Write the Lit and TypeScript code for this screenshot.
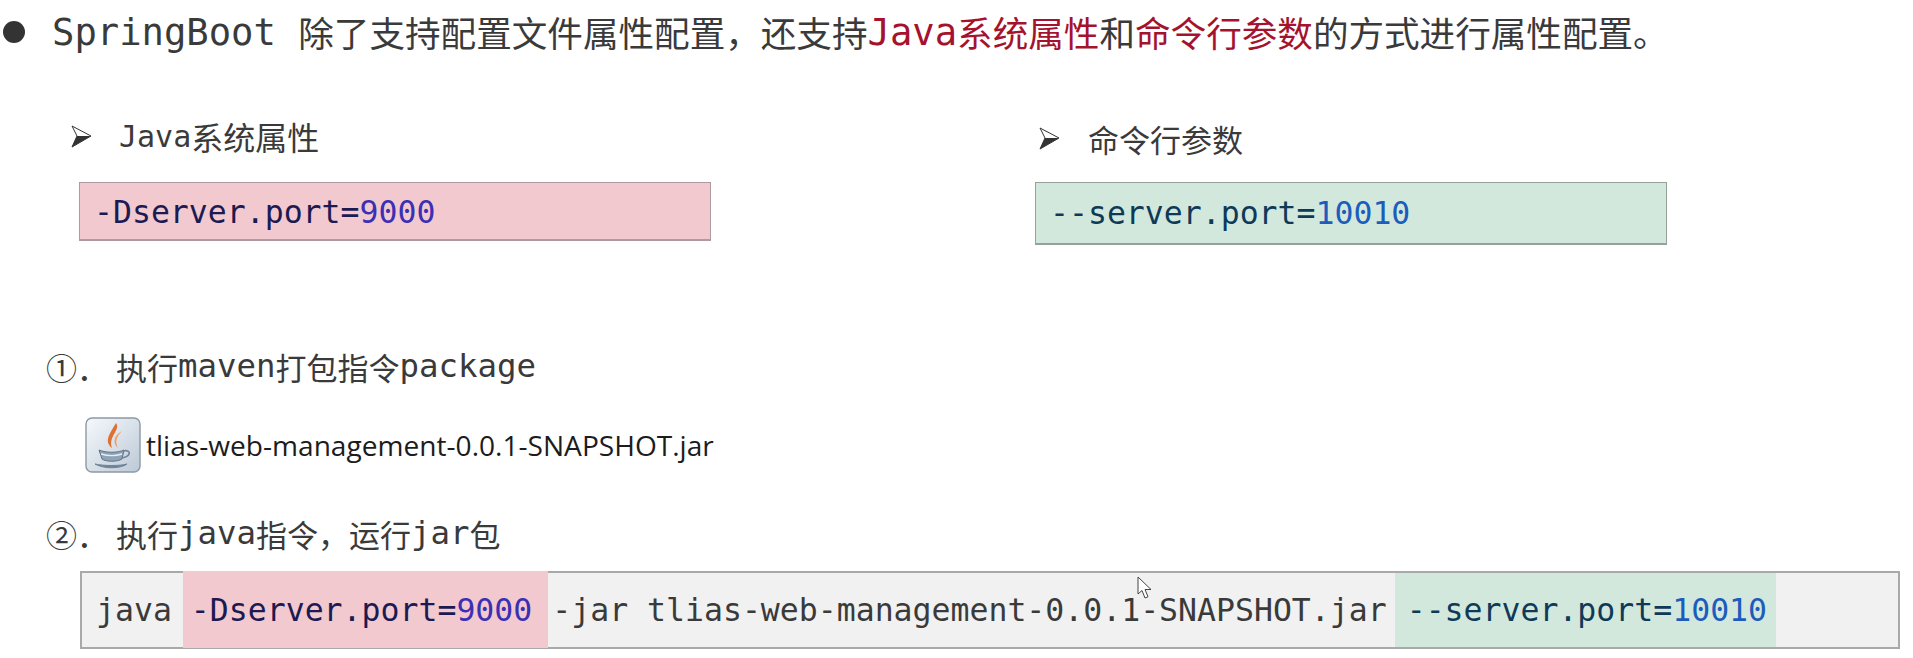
import { LitElement, html, css, svg } from "lit";
import { customElement } from "lit/decorators.js";

const arrow = svg`<svg class="arrow" viewBox="0 0 22 24" width="22" height="24"><path d="M2 2 L21 12 L2 23 L7 12 Z" fill="#fff" stroke="#333" stroke-width="1"/><path d="M7 12 L21 12 L2 23 Z" fill="#333"/></svg>`;

const javaIcon = svg`<svg class="jicon" viewBox="0 0 56 56" width="56" height="56">
  <defs><linearGradient id="jbg" x1="0" y1="0" x2="1" y2="1"><stop offset="0" stop-color="#f6f9fc"/><stop offset="1" stop-color="#bcc9d6"/></linearGradient></defs>
  <rect x="1" y="1" width="54" height="54" rx="6" fill="url(#jbg)" stroke="#8c99a6" stroke-width="1.4"/>
  <path d="M31 6 C36 13 23 19 27 31 C18 24 26 15 31 6 Z" fill="#dd7032"/>
  <path d="M37 14 C31 20 30 25 33 31 C27 26 29 18 37 14 Z" fill="#eb9f68"/>
  <path d="M14 33 C21 36 33 36 39 33 L37 42 C32 45 21 45 17 42 Z" fill="#8fa3b6" stroke="#5f7488" stroke-width="1"/>
  <path d="M38 34 C46 32 47 39 37 41" fill="none" stroke="#6e8398" stroke-width="1.6"/>
  <path d="M16 37 C23 39 31 39 37 37" fill="none" stroke="#e8eef3" stroke-width="1.4"/>
  <path d="M10 47 C19 52 35 52 42 47 C35 49 19 49 10 47 Z" fill="#6e8398" stroke="#6e8398"/>
</svg>`;

const cursor = svg`<svg class="cursor" viewBox="0 0 16 24" width="16" height="24"><path d="M1 1 L1 18 L5 14.5 L8 22 L11 20.8 L8 13.5 L14 13.5 Z" fill="#fff" stroke="#444" stroke-width="1"/></svg>`;

@customElement("app-root")
export class AppRoot extends LitElement {
  static styles = css`
    :host {
      display: block;
      width: 1913px;
      height: 658px;
      overflow: hidden;
      background: #fff;
      color: #3a3a3a;
      font-family: "DejaVu Sans Mono", "Noto Sans CJK SC", monospace;
      position: relative;
    }
    .cjk { font-family: "Noto Sans CJK SC", sans-serif; }
    .lead {
      height: 63px;
      display: flex;
      align-items: center;
      padding-left: 3px;
      font-size: 37.2px;
      white-space: pre;
    }
    .lead .cjk { font-size: 35.6px; }
    .bullet {
      width: 22px;
      height: 22px;
      border-radius: 50%;
      background: #333;
      margin-right: 27px;
      flex: none;
    }
    .red { color: #a5122e; }
    .columns { display: flex; margin-top: 43px; }
    .col-l { margin-left: 70px; width: 965px; }
    .col-r { width: 640px; }
    .sub {
      height: 60px;
      margin-bottom: 16px;
      display: flex;
      align-items: center;
      font-size: 30px;
      white-space: pre;
    }
    .sub .cjk { font-size: 32px; }
    .sub .arrow { flex: none; margin-right: 27px; }
    .col-r .sub { margin-left: 3px; padding-top: 4px; box-sizing: border-box; }
    .col-r .sub .cjk { font-size: 31px; }
    .col-r .sub .arrow { margin-right: 28px; }
    .code { display: flex; align-items: center; font-size: 31.5px; white-space: pre; }
    .box { border: 1px solid #a5a5a5; border-bottom-width: 2px; box-sizing: border-box; padding-left: 14px; width: 632px; }
    .box-r { background: #f2c9cf; border-color: #b09aa2; height: 59px; margin-left: 9px; color: #1b1a52; padding-top: 2px; }
    .box-g { background: #d3e8dc; border-color: #93a39a; height: 63px; color: #0e3a58; }
    .n-r { color: #3b2fb4; }
    .n-g { color: #1c5cbc; }
    .step {
      height: 60px;
      display: flex;
      align-items: center;
      margin-left: 46px;
      font-size: 32.4px;
      white-space: pre;
    }
    .step .cjk { font-size: 31px; }
    .step .gap { margin-right: 8px; }
    .step1 { margin-top: 91px; }
    .jar {
      display: flex;
      align-items: center;
      margin-left: 85px;
      height: 56px;
      margin-top: 21px;
      gap: 5px;
      font-family: "Open Sans", sans-serif;
      font-size: 28.1px;
      color: #1c1c1c;
      white-space: pre;
    }
    .step2 { margin-top: 30px; }
    .cmd {
      margin: 8px 13px 0 80px;
      height: 78px;
      background: #f1f1f1;
      border: 2px solid #a9a9a9;
      box-sizing: border-box;
      align-items: stretch;
      padding-left: 14px;
      font-size: 31.5px;
    }
    .seg { display: flex; align-items: center; }
    .hl-r { background: #f2c9cf; color: #1b1a52; margin-left: 11px; padding: 0 16px 0 8px; margin-top: -2px; margin-bottom: -1px; }
    .hl-g { background: #d3e8dc; color: #0e3a58; margin-left: 8px; padding: 0 9px 0 12px; }
    .mid { margin-left: 4px; }
    .cursor { position: absolute; left: 1137px; top: 576px; }
  `;

  render() {
    return html`
      <div class="lead">
        <span class="bullet"></span><span>SpringBoot </span><span class="cjk">除了支持配置文件属性配置，还支持</span><span class="red">Java</span><span class="red cjk">系统属性</span><span class="cjk">和</span><span class="red cjk">命令行参数</span><span class="cjk">的方式进行属性配置。</span>
      </div>
      <div class="columns">
        <div class="col-l">
          <div class="sub">${arrow}<span>Java</span><span class="cjk">系统属性</span></div>
          <div class="code box box-r"><span>-Dserver.port=</span><span class="n-r">9000</span></div>
        </div>
        <div class="col-r">
          <div class="sub">${arrow}<span class="cjk">命令行参数</span></div>
          <div class="code box box-g"><span>--server.port=</span><span class="n-g">10010</span></div>
        </div>
      </div>
      <div class="step step1"><span class="cjk gap">①．</span><span class="cjk">执行</span><span>maven</span><span class="cjk">打包指令</span><span>package</span></div>
      <div class="jar">${javaIcon}<span>tlias-web-management-0.0.1-SNAPSHOT.jar</span></div>
      <div class="step step2"><span class="cjk gap">②．</span><span class="cjk">执行</span><span>java</span><span class="cjk">指令，运行</span><span>jar</span><span class="cjk">包</span></div>
      <div class="code cmd">
        <span class="seg">java</span>
        <span class="seg hl-r"><span>-Dserver.port=</span><span class="n-r">9000</span></span>
        <span class="seg mid">-jar tlias-web-management-0.0.1-SNAPSHOT.jar</span>
        <span class="seg hl-g"><span>--server.port=</span><span class="n-g">10010</span></span>
      </div>
      ${cursor}
    `;
  }
}
